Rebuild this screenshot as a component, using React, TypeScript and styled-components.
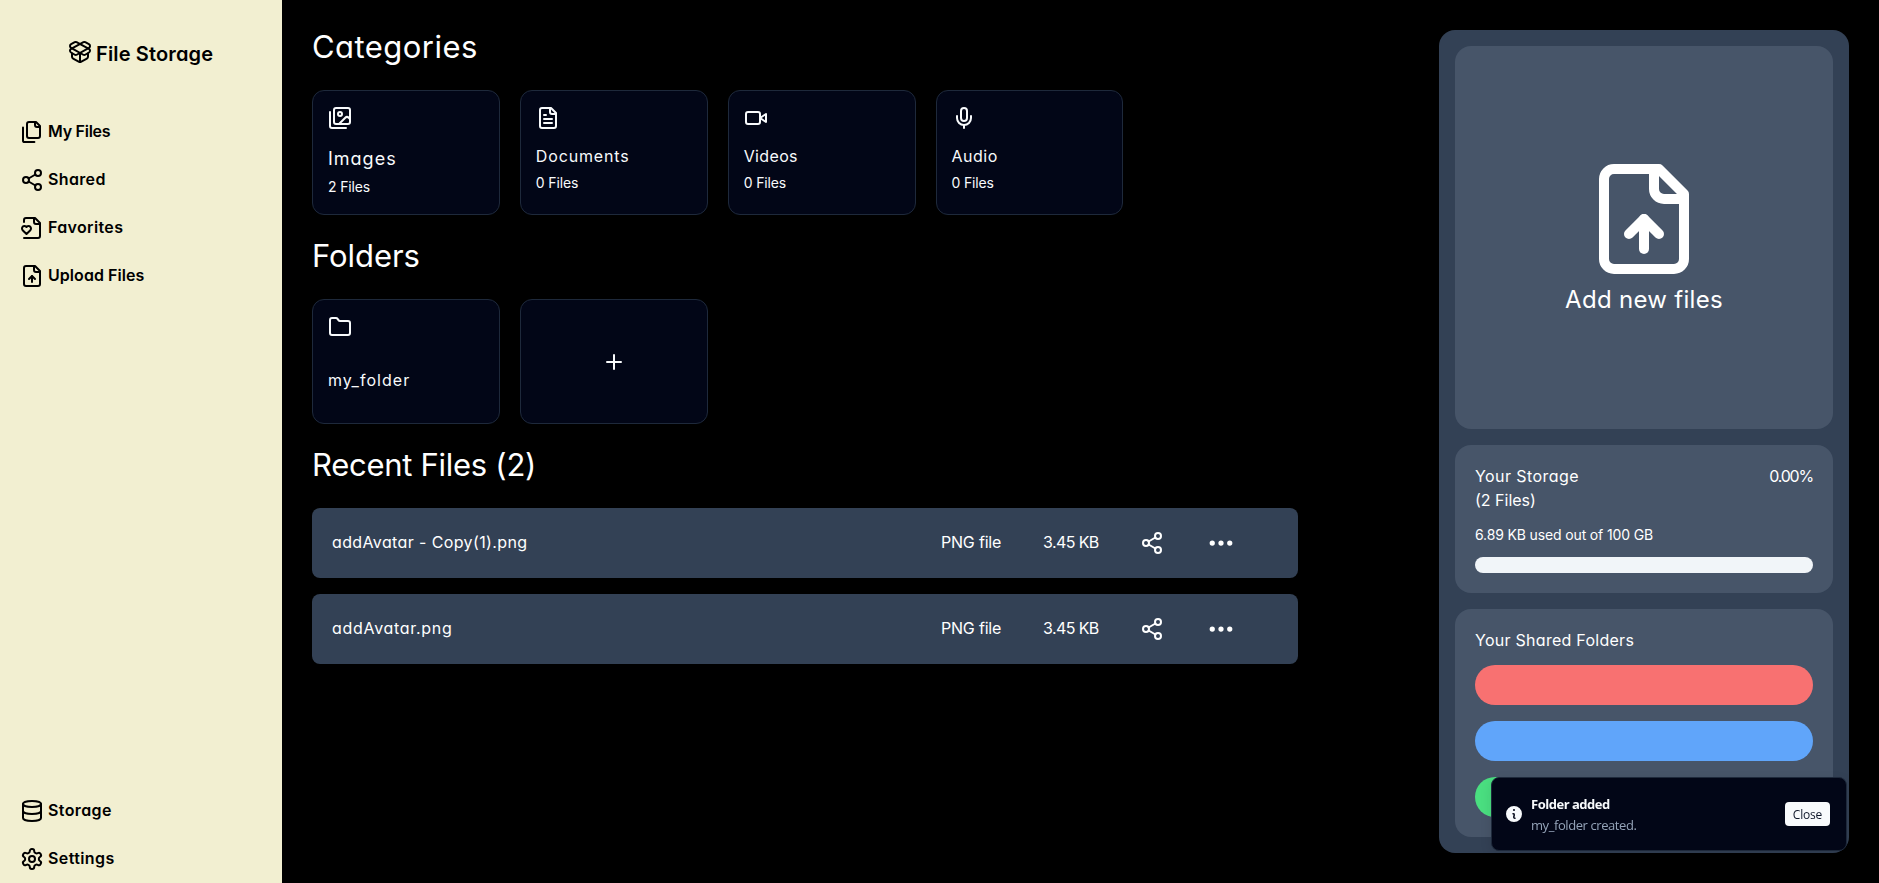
import React from 'react';
import styled, { createGlobalStyle, css } from 'styled-components';
import { Database, Folder, Mic, Plus, Share2 } from 'lucide-react';
import { BsThreeDots } from 'react-icons/bs';

const GlobalStyle = createGlobalStyle`
  *, *::before, *::after { box-sizing: border-box; }
  body {
    margin: 0;
    background: #000;
    color: #fff;
    font-family: Inter, 'Liberation Sans', sans-serif;
    font-feature-settings: 'cv11';
    font-size: 16px;
    line-height: 24px;
  }
  h1, h2, h3, p { margin: 0; font-weight: 400; }
  svg { display: block; flex: none; }
  button { font: inherit; border: 0; padding: 0; background: none; color: inherit; }
`;

interface Tracked {
  $track?: number;
}
const tracked = css<Tracked>`
  letter-spacing: ${({ $track = 0 }) => $track}px;
  white-space: nowrap;
`;

/* A 24px line whose baseline sits on the 17th pixel. */
const bodyLine = css`
  display: block;
  padding-bottom: 2px;
  font-size: 16px;
  line-height: 22px;
`;

/* ---------- icons ---------- */

const Stroke = styled.svg.attrs({ viewBox: '0 0 24 24' })<{ $size?: number }>`
  width: ${({ $size = 24 }) => $size}px;
  height: ${({ $size = 24 }) => $size}px;
  fill: none;
  stroke: currentColor;
  stroke-width: 2;
  stroke-linecap: round;
  stroke-linejoin: round;
`;

const PackageOpenIcon = () => (
  <Stroke>
    <path d="M20.91 8.84 8.56 2.23a1.93 1.93 0 0 0-1.81 0L3.1 4.13a2.12 2.12 0 0 0-.05 3.69l12.22 6.93a2 2 0 0 0 1.94 0L21 12.51a2.12 2.12 0 0 0-.09-3.67Z" />
    <path d="m3.09 8.84 12.35-6.61a1.93 1.93 0 0 1 1.81 0l3.65 1.9a2.12 2.12 0 0 1 .1 3.69L8.73 14.75a2 2 0 0 1-1.94 0L3 12.51a2.12 2.12 0 0 1 .09-3.67Z" />
    <path d="M12 22V13" />
    <path d="M20 13.5v3.37a2.06 2.06 0 0 1-1.11 1.83l-6 3.08a1.93 1.93 0 0 1-1.78 0l-6-3.08A2.06 2.06 0 0 1 4 16.87V13.5" />
  </Stroke>
);

const FilesIcon = () => (
  <Stroke>
    <path d="M20 7h-3a2 2 0 0 1-2-2V2" />
    <path d="M9 18a2 2 0 0 1-2-2V4a2 2 0 0 1 2-2h7l4 4v10a2 2 0 0 1-2 2Z" />
    <path d="M3 7.6v12.8A1.6 1.6 0 0 0 4.6 22h9.8" />
  </Stroke>
);

const FileHeartIcon = () => (
  <Stroke>
    <path d="M4 22h14a2 2 0 0 0 2-2V7l-5-5H6a2 2 0 0 0-2 2v2" />
    <path d="M14 2v4a2 2 0 0 0 2 2h4" />
    <path d="M10.29 10.7a2.43 2.43 0 0 0-2.66-.52c-.29.12-.56.3-.78.53l-.35.34-.35-.34a2.43 2.43 0 0 0-2.65-.53c-.3.12-.56.3-.79.53-.95.94-1 2.53.2 3.74L6.5 18l3.6-3.55c1.2-1.21 1.14-2.8.19-3.74Z" />
  </Stroke>
);

const FileUpIcon = ({ size = 24 }: { size?: number }) => (
  <Stroke $size={size}>
    <path d="M15 2H6a2 2 0 0 0-2 2v16a2 2 0 0 0 2 2h12a2 2 0 0 0 2-2V7Z" />
    <path d="M14 2v4a2 2 0 0 0 2 2h4" />
    <path d="M12 12v6" />
    <path d="m15 15-3-3-3 3" />
  </Stroke>
);

const FileTextIcon = () => (
  <Stroke>
    <path d="M15 2H6a2 2 0 0 0-2 2v16a2 2 0 0 0 2 2h12a2 2 0 0 0 2-2V7Z" />
    <path d="M14 2v4a2 2 0 0 0 2 2h4" />
    <path d="M10 9H8" />
    <path d="M16 13H8" />
    <path d="M16 17H8" />
  </Stroke>
);

const ImagesIcon = () => (
  <Stroke>
    <path d="M18 22H4a2 2 0 0 1-2-2V6" />
    <path d="m22 13-1.296-1.296a2.41 2.41 0 0 0-3.408 0L11 18" />
    <circle cx="12" cy="8" r="2" />
    <rect width="16" height="16" x="6" y="2" rx="2" />
  </Stroke>
);

const VideoIcon = () => (
  <Stroke>
    <path d="m22 8-6 4 6 4V8Z" />
    <rect width="14" height="12" x="2" y="6" rx="2" />
  </Stroke>
);

const GearIcon = () => (
  <Stroke>
    <path d="M12.22 2h-.44a2 2 0 0 0-2 2v.18a2 2 0 0 1-1 1.73l-.43.25a2 2 0 0 1-2 0l-.15-.08a2 2 0 0 0-2.73.73l-.22.38a2 2 0 0 0 .73 2.73l.15.1a2 2 0 0 1 1 1.72v.51a2 2 0 0 1-1 1.74l-.15.09a2 2 0 0 0-.73 2.73l.22.38a2 2 0 0 0 2.73.73l.15-.08a2 2 0 0 1 2 0l.43.25a2 2 0 0 1 1 1.73V20a2 2 0 0 0 2 2h.44a2 2 0 0 0 2-2v-.18a2 2 0 0 1 1-1.73l.43-.25a2 2 0 0 1 2 0l.15.08a2 2 0 0 0 2.73-.73l.22-.39a2 2 0 0 0-.73-2.73l-.15-.08a2 2 0 0 1-1-1.74v-.5a2 2 0 0 1 1-1.74l.15-.09a2 2 0 0 0 .73-2.73l-.22-.38a2 2 0 0 0-2.73-.73l-.15.08a2 2 0 0 1-2 0l-.43-.25a2 2 0 0 1-1-1.73V4a2 2 0 0 0-2-2z" />
    <circle cx="12" cy="12" r="3" />
  </Stroke>
);

const InfoSvg = styled.svg`
  width: 20px;
  height: 20px;
  fill: currentColor;
`;
const InfoIcon = () => (
  <InfoSvg viewBox="0 0 20 20">
    <path
      fillRule="evenodd"
      clipRule="evenodd"
      d="M18 10a8 8 0 1 1-16 0 8 8 0 0 1 16 0Zm-7-4a1 1 0 1 1-2 0 1 1 0 0 1 2 0ZM9 9a.75.75 0 0 0 0 1.5h.253a.25.25 0 0 1 .244.304l-.459 2.066A1.75 1.75 0 0 0 10.747 15H11a.75.75 0 0 0 0-1.5h-.253a.25.25 0 0 1-.244-.304l.459-2.066A1.75 1.75 0 0 0 9.253 9H9Z"
    />
  </InfoSvg>
);

/* ---------- page frame ---------- */

const Page = styled.div`
  display: flex;
  height: 883px;
  overflow: hidden;
`;

const Sidebar = styled.aside`
  display: flex;
  flex-direction: column;
  justify-content: space-between;
  flex: none;
  width: 282px;
  padding: 40px 0 0;
  background: #f2efd1;
  color: #000;
  font-weight: 600;
`;

const Brand = styled.h1<Tracked>`
  display: flex;
  align-items: flex-start;
  gap: 4px;
  margin-bottom: 40px;
  padding-left: 68px;
  font-size: 20px;
  font-weight: 600;
  line-height: 28px;
  ${tracked}
`;

const NavList = styled.nav`
  display: flex;
  flex-direction: column;
`;

const NavItem = styled.a`
  display: flex;
  align-items: center;
  gap: 4px;
  padding: 12px 20px;
`;

const NavLabel = styled.span<Tracked>`
  ${bodyLine}
  ${tracked}
`;

const Main = styled.main`
  flex: 1;
  display: flex;
  flex-direction: column;
  gap: 24px;
  padding: 30px;
`;

const Section = styled.section`
  display: flex;
  flex-direction: column;
  gap: 24px;
`;

const SectionTitle = styled.h2<Tracked>`
  padding-bottom: 2px;
  font-size: 31px;
  line-height: 34px;
  ${tracked}
`;

/* ---------- category and folder cards ---------- */

const CardGrid = styled.div`
  display: grid;
  grid-template-columns: repeat(4, 1fr);
  gap: 20px;
  width: 811.4px;
`;

const Card = styled.div<{ $gap?: number; $centered?: boolean }>`
  display: flex;
  flex-direction: column;
  gap: ${({ $gap = 15 }) => $gap}px;
  ${({ $centered }) => $centered && 'align-items: center; justify-content: center;'}
  height: 125px;
  padding: 15px;
  border: 1px solid #1e293b;
  border-radius: 12px;
  background: #020617;
  color: #f8fafc;
`;

const CardText = styled.div`
  display: flex;
  flex-direction: column;
  gap: 4px;
`;

const CardTitle = styled.h3<Tracked & { $large?: boolean }>`
  ${({ $large }) => ($large ? 'font-size: 18px; line-height: 28px;' : bodyLine)}
  ${tracked}
`;

const CardCount = styled.p<Tracked>`
  font-size: 14px;
  line-height: 20px;
  ${tracked}
`;

/* ---------- recent files ---------- */

const FileList = styled.div`
  display: flex;
  flex-direction: column;
  gap: 16px;
  width: 986px;
`;

const FileRow = styled.div`
  display: grid;
  grid-template-columns: 1fr 62px 57px 24px 31px;
  column-gap: 40px;
  align-items: center;
  height: 70px;
  padding: 0 63px 0 20px;
  border-radius: 8px;
  background: #334155;
`;

const FileCell = styled.span<Tracked>`
  ${bodyLine}
  ${tracked}
`;

const MenuButton = styled.button`
  display: flex;
  justify-content: flex-end;
`;

/* ---------- right panel ---------- */

const Panel = styled.aside`
  display: flex;
  flex-direction: column;
  gap: 16px;
  flex: none;
  width: 410px;
  margin: 30px 30px 30px 0;
  padding: 16px;
  border-radius: 16px;
  background: #334155;
`;

const Tile = styled.section`
  display: flex;
  flex-direction: column;
  gap: 12px;
  padding: 20px;
  border-radius: 16px;
  background: #475569;
`;

const DropTile = styled(Tile)`
  flex: 1;
  align-items: center;
  justify-content: center;
  gap: 5px;
`;

const DropLabel = styled.p<Tracked>`
  font-size: 24px;
  line-height: 32px;
  ${tracked}
`;

const StorageHead = styled.div`
  display: flex;
  justify-content: space-between;
`;

const Label = styled.p<Tracked>`
  ${bodyLine}
  ${tracked}
`;

const Usage = styled.p<Tracked>`
  font-size: 14px;
  line-height: 20px;
  ${tracked}
`;

const ProgressTrack = styled.div`
  height: 16px;
  border-radius: 8px;
  background: #f1f5f9;
`;

const SharedList = styled.div`
  display: flex;
  flex-direction: column;
  gap: 16px;
`;

const SharedPill = styled.div<{ $color: string }>`
  height: 40px;
  border-radius: 20px;
  background: ${({ $color }) => $color};
`;

/* ---------- toast ---------- */

const Toast = styled.div`
  position: fixed;
  right: 32px;
  bottom: 32px;
  display: flex;
  align-items: center;
  width: 356px;
  height: 74px;
  padding: 0 16px 0 12px;
  border: 1px solid #1e293b;
  border-radius: 8px;
  background: #020617;
  color: #f8fafc;
  font-family: 'Open Sans', 'Noto Sans', sans-serif;
  font-size: 13px;
  line-height: 19.5px;
  box-shadow: 0 4px 12px rgba(0, 0, 0, 0.1);
`;

const ToastBody = styled.div`
  display: flex;
  flex-direction: column;
  gap: 2px;
  flex: 1;
  margin-left: 7px;
  padding-top: 2px;
`;

const ToastTitle = styled.div<Tracked>`
  font-weight: 700;
  ${tracked}
`;

const ToastDetail = styled.div<Tracked>`
  color: #94a3b8;
  ${tracked}
`;

const ToastButton = styled.button<Tracked>`
  && {
    width: 45px;
    height: 24px;
    padding-top: 1px;
    border-radius: 4px;
    background: #f8fafc;
    color: #0f172a;
    font-size: 12px;
    line-height: 23px;
  }
  ${tracked}
`;

/* ---------- data ---------- */

const primaryNav = [
  { label: 'My Files', icon: <FilesIcon />, track: -0.25 },
  { label: 'Shared', icon: <Share2 />, track: 0.35 },
  { label: 'Favorites', icon: <FileHeartIcon />, track: 0.35 },
  { label: 'Upload Files', icon: <FileUpIcon />, track: 0.05 },
];

const secondaryNav = [
  { label: 'Storage', icon: <Database />, track: 0.4 },
  { label: 'Settings', icon: <GearIcon />, track: 0.4 },
];

const categories = [
  { title: 'Images', count: 2, icon: <ImagesIcon />, large: true, track: 1 },
  { title: 'Documents', count: 0, icon: <FileTextIcon />, large: false, track: 0.85 },
  { title: 'Videos', count: 0, icon: <VideoIcon />, large: false, track: 0.35 },
  { title: 'Audio', count: 0, icon: <Mic />, large: false, track: 0.5 },
];

const recentFiles = [
  { name: 'addAvatar - Copy(1).png', type: 'PNG file', size: '3.45 KB', track: 0.38 },
  { name: 'addAvatar.png', type: 'PNG file', size: '3.45 KB', track: 0.7 },
];

const sharedColors = ['#f87171', '#60a5fa', '#4ade80'];

export default function App() {
  return (
    <>
      <GlobalStyle />
      <Page>
        <Sidebar>
          <div>
            <Brand $track={0.15}>
              <PackageOpenIcon />
              File Storage
            </Brand>
            <NavList>
              {primaryNav.map((item) => (
                <NavItem key={item.label}>
                  {item.icon}
                  <NavLabel $track={item.track}>{item.label}</NavLabel>
                </NavItem>
              ))}
            </NavList>
          </div>
          <NavList>
            {secondaryNav.map((item) => (
              <NavItem key={item.label}>
                {item.icon}
                <NavLabel $track={item.track}>{item.label}</NavLabel>
              </NavItem>
            ))}
          </NavList>
        </Sidebar>

        <Main>
          <Section>
            <SectionTitle $track={0.45}>Categories</SectionTitle>
            <CardGrid>
              {categories.map((c) => (
                <Card key={c.title}>
                  {c.icon}
                  <CardText>
                    <CardTitle $large={c.large} $track={c.track}>
                      {c.title}
                    </CardTitle>
                    <CardCount $track={-0.15}>{`${c.count} Files`}</CardCount>
                  </CardText>
                </Card>
              ))}
            </CardGrid>
          </Section>

          <Section>
            <SectionTitle $track={-0.05}>Folders</SectionTitle>
            <CardGrid>
              <Card $gap={30}>
                <Folder />
                <CardTitle $track={1.05}>my_folder</CardTitle>
              </Card>
              <Card $centered>
                <Plus />
              </Card>
            </CardGrid>
          </Section>

          <Section>
            <SectionTitle $track={-0.28}>Recent Files (2)</SectionTitle>
            <FileList>
              {recentFiles.map((file) => (
                <FileRow key={file.name}>
                  <FileCell $track={file.track}>{file.name}</FileCell>
                  <FileCell $track={-0.2}>{file.type}</FileCell>
                  <FileCell $track={-0.6}>{file.size}</FileCell>
                  <Share2 />
                  <MenuButton aria-label="More">
                    <BsThreeDots size={28} />
                  </MenuButton>
                </FileRow>
              ))}
            </FileList>
          </Section>
        </Main>

        <Panel>
          <DropTile>
            <FileUpIcon size={120} />
            <DropLabel $track={0.3}>Add new files</DropLabel>
          </DropTile>
          <Tile>
            <StorageHead>
              <div>
                <Label $track={0.43}>Your Storage</Label>
                <Label>(2 Files)</Label>
              </div>
              <Label $track={-1.2}>0.00%</Label>
            </StorageHead>
            <Usage $track={-0.14}>6.89 KB used out of 100 GB</Usage>
            <ProgressTrack />
          </Tile>
          <Tile>
            <Label $track={0.27}>Your Shared Folders</Label>
            <SharedList>
              {sharedColors.map((color) => (
                <SharedPill key={color} $color={color} />
              ))}
            </SharedList>
          </Tile>
        </Panel>
      </Page>

      <Toast>
        <InfoIcon />
        <ToastBody>
          <ToastTitle $track={-0.48}>Folder added</ToastTitle>
          <ToastDetail $track={-0.42}>my_folder created.</ToastDetail>
        </ToastBody>
        <ToastButton $track={-0.2}>Close</ToastButton>
      </Toast>
    </>
  );
}
